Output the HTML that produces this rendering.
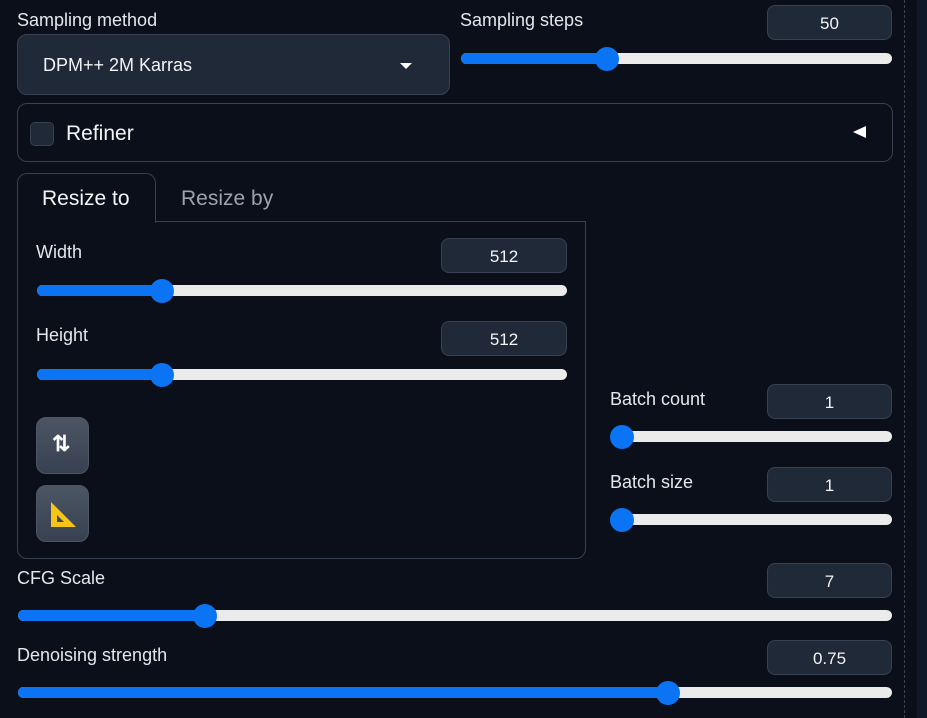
<!DOCTYPE html>
<html><head><style>
body{margin:0;width:927px;height:718px;background:#0b0f19;position:relative;overflow:hidden;font-family:"Liberation Sans",sans-serif;color:#e5e7eb}
.a{position:absolute}
.lbl{position:absolute;font-size:18px;color:#e5e7eb;line-height:20px}
.num{position:absolute;width:125px;height:35px;background:#1f2937;border:1px solid #374151;border-radius:8px;box-sizing:border-box;text-align:center;font-size:17px;line-height:35px;color:#f3f4f6}
.tr{position:absolute;height:11px;background:#ebebeb;border-radius:6px}
.fill{position:absolute;left:0;top:0;height:11px;background:#0b74f5;border-radius:6px}
.th{position:absolute;top:-6px;width:24px;height:24px;border-radius:50%;background:#0b74f5;margin-left:-12px}
.btn{position:absolute;left:36px;width:53px;height:57px;border-radius:10px;background:linear-gradient(#4b5563,#374151);border:1px solid #4b5563;box-sizing:border-box}
</style></head><body>
<div class="a" style="left:904px;top:0;height:718px;border-left:1px dashed #3b4252"></div>
<div class="a" style="left:917px;top:0;width:10px;height:718px;background:#111827"></div>

<div class="lbl" style="left:17px;top:10px">Sampling method</div>
<div class="a" style="left:17px;top:34px;width:433px;height:61px;background:#1f2937;border:1px solid #374151;border-radius:10px;box-sizing:border-box"></div>
<div class="a" style="left:43px;top:55px;font-size:18px;color:#f3f4f6">DPM++ 2M Karras</div>
<div class="a" style="left:400px;top:63px;width:0;height:0;border-left:6px solid transparent;border-right:6px solid transparent;border-top:6px solid #fff"></div>

<div class="lbl" style="left:460px;top:10px">Sampling steps</div>
<div class="num" style="left:767px;top:5px">50</div>
<div class="tr" style="left:461px;top:53px;width:431px"><div class="fill" style="width:146px"></div><div class="th" style="left:146px"></div></div>

<div class="a" style="left:17px;top:103px;width:876px;height:59px;border:1px solid #374151;border-radius:10px;box-sizing:border-box"></div>
<div class="a" style="left:30px;top:122px;width:24px;height:24px;background:#1f2937;border:1px solid #374151;border-radius:5px;box-sizing:border-box"></div>
<div class="a" style="left:66px;top:122px;font-size:21px;color:#f3f4f6">Refiner</div>
<div class="a" style="left:853px;top:126px;width:0;height:0;border-top:6px solid transparent;border-bottom:6px solid transparent;border-right:13px solid #fff"></div>

<div class="a" style="left:17px;top:221px;width:569px;height:338px;border:1px solid #374151;border-radius:0 0 10px 10px;box-sizing:border-box"></div>
<div class="a" style="left:17px;top:173px;width:139px;height:50px;background:#0b0f19;border:1px solid #374151;border-bottom:none;border-radius:10px 10px 0 0;box-sizing:border-box"></div>
<div class="a" style="left:42px;top:187px;font-size:21px;color:#f3f4f6">Resize to</div>
<div class="a" style="left:181px;top:187px;font-size:21px;color:#9ca3af">Resize by</div>

<div class="lbl" style="left:36px;top:242px">Width</div>
<div class="num" style="left:441px;top:238px;width:126px">512</div>
<div class="tr" style="left:37px;top:285px;width:530px"><div class="fill" style="width:125px"></div><div class="th" style="left:125px"></div></div>
<div class="lbl" style="left:36px;top:325px">Height</div>
<div class="num" style="left:441px;top:321px;width:126px">512</div>
<div class="tr" style="left:37px;top:369px;width:530px"><div class="fill" style="width:125px"></div><div class="th" style="left:125px"></div></div>

<div class="btn" style="top:417px"><div class="a" style="left:15px;top:13px;font-size:22px;font-weight:bold;color:#fff">⇅</div></div>
<div class="btn" style="top:485px"><svg class="a" style="left:13px;top:15px" width="27" height="27" viewBox="0 0 27 27"><path d="M1 1 L26 26 L1 26 Z M7 14 L7 21 L14 21 Z" fill="#f5c518" fill-rule="evenodd"/></svg></div>

<div class="lbl" style="left:610px;top:389px">Batch count</div>
<div class="num" style="left:767px;top:384px">1</div>
<div class="tr" style="left:611px;top:431px;width:281px"><div class="fill" style="width:11px"></div><div class="th" style="left:11px"></div></div>
<div class="lbl" style="left:610px;top:472px">Batch size</div>
<div class="num" style="left:767px;top:467px">1</div>
<div class="tr" style="left:611px;top:514px;width:281px"><div class="fill" style="width:11px"></div><div class="th" style="left:11px"></div></div>

<div class="lbl" style="left:17px;top:568px">CFG Scale</div>
<div class="num" style="left:767px;top:563px">7</div>
<div class="tr" style="left:18px;top:610px;width:874px"><div class="fill" style="width:187px"></div><div class="th" style="left:187px"></div></div>
<div class="lbl" style="left:17px;top:645px">Denoising strength</div>
<div class="num" style="left:767px;top:640px">0.75</div>
<div class="tr" style="left:18px;top:687px;width:874px"><div class="fill" style="width:650px"></div><div class="th" style="left:650px"></div></div>
</body></html>
